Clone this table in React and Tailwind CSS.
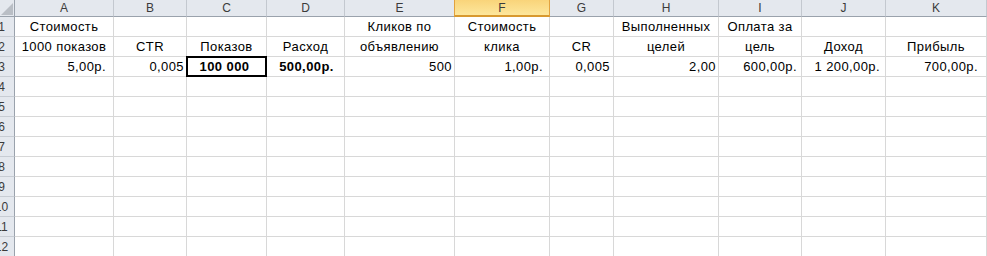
import React from "react";

const cols = ["A", "B", "C", "D", "E", "F", "G", "H", "I", "J", "K"];

const row1 = { A: "Стоимость", E: "Кликов по", F: "Стоимость", H: "Выполненных", I: "Оплата за" };
const row2 = {
  A: "1000 показов", B: "CTR", C: "Показов", D: "Расход", E: "объявлению", F: "клика",
  G: "CR", H: "целей", I: "цель", J: "Доход", K: "Прибыль",
};
const row3 = {
  A: { t: "5,00р.", c: "justify-end pr-[7px]" },
  B: { t: "0,005", c: "justify-end pr-[2px]" },
  C: { t: "100 000", c: "justify-center font-bold pr-[4px]" },
  D: { t: "500,00р.", c: "justify-center font-bold pl-[2px]" },
  E: { t: "500", c: "justify-end pr-[2px]" },
  F: { t: "1,00р.", c: "justify-end pr-[6px]" },
  G: { t: "0,005", c: "justify-end pr-[3px]" },
  H: { t: "2,00", c: "justify-end pr-[2px]" },
  I: { t: "600,00р.", c: "justify-end pr-[4px]" },
  J: { t: "1 200,00р.", c: "justify-end pr-[5px]" },
  K: { t: "700,00р.", c: "justify-end pr-[8px]" },
};

function RowHead({ n }) {
  return (
    <div className="h-[20px] bg-[#e4e8ee] border-r border-r-[#9aa2ac] border-b border-b-[#c7ccd3] flex justify-end items-center overflow-hidden">
      <div className="w-[25px] shrink-0 text-center text-[12px] leading-none text-[#3b3b3b]">{n}</div>
    </div>
  );
}

function Cell({ children, className = "", extra }) {
  return (
    <div className={"relative h-[20px] border-r border-b border-[#d8d8d8] flex items-center whitespace-nowrap overflow-visible text-[13px] tracking-[0.4px] text-black " + className}>
      {children}
      {extra}
    </div>
  );
}

export default function App() {
  const rows = [];
  for (let r = 1; r <= 12; r++) {
    const cells = [<RowHead key={"h" + r} n={r} />];
    cols.forEach((c) => {
      let content = null;
      let cls = "justify-center";
      let extra = null;
      if (r === 1 && row1[c]) content = row1[c];
      if (r === 2 && row2[c]) content = row2[c];
      if (r === 3) {
        content = row3[c].t;
        cls = row3[c].c;
        if (c === "C") {
          extra = <div className="absolute -left-px -top-px -right-px -bottom-px border-2 border-black pointer-events-none" />;
        }
      }
      cells.push(
        <Cell key={c + r} className={cls} extra={extra}>
          {content}
        </Cell>
      );
    });
    rows.push(...cells);
  }

  return (
    <div
      className="w-[987px] h-[256px] overflow-hidden bg-white"
      style={{ fontFamily: '"Liberation Sans", Arial, sans-serif' }}
    >
      <div className="grid grid-cols-[15px_99px_73px_80px_78px_110px_95px_64px_105px_83px_84px_101px]">
        <div className="h-[17px] bg-[#e4e8ee] border-r border-r-[#9aa2ac] border-b border-b-[#9aa2ac] flex items-end justify-end overflow-hidden">
          <svg width="12" height="12" viewBox="0 0 12 12" className="mr-[1px] mb-[1px]">
            <polygon points="12,0 12,12 0,12" fill="#b9bec5" />
          </svg>
        </div>
        {cols.map((c) =>
          c === "F" ? (
            <div
              key={c}
              className="h-[17px] bg-gradient-to-b from-[#f9d47a] to-[#fde79c] border-r border-r-[#e2a23e] border-l border-l-[#e2a23e] -ml-px border-b-2 border-b-[#d8992f] flex items-center justify-center text-[12px] leading-none text-[#3b3b3b]"
            >
              {c}
            </div>
          ) : (
            <div
              key={c}
              className="h-[17px] bg-[#e4e8ee] border-r border-r-[#c3c8cf] border-b border-b-[#9aa2ac] flex items-center justify-center text-[12px] leading-none text-[#3b3b3b]"
            >
              {c}
            </div>
          )
        )}
        {rows}
      </div>
    </div>
  );
}
